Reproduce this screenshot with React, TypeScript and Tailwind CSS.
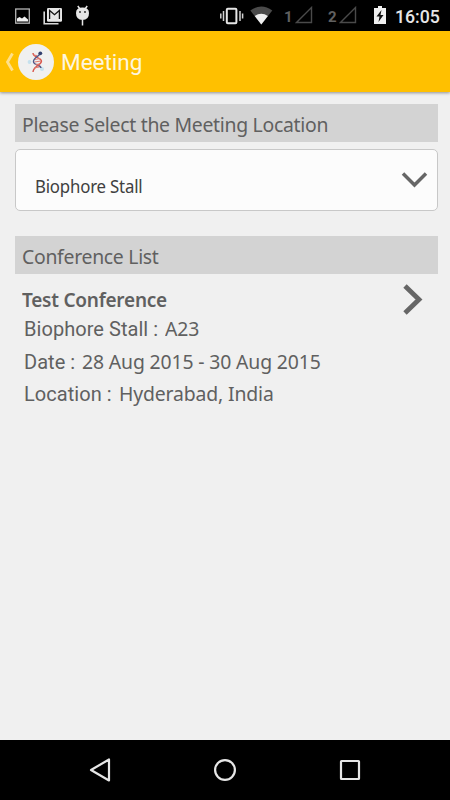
import React from "react";

const StatusBar = () => {
  return (
    <header className="flex h-[31px] items-center bg-black pr-[9px] pl-[15px]">
      <svg width="76" height="24" viewBox="15 4 76 24" fill="none">
        <rect x="15.7" y="9" width="13.6" height="14.2" stroke="#b4b4b4" strokeWidth="1.3" />
        <path d="M17 21.500v-3l2.500-1.500 2.500 1.500 2.500-2 3.500 3v2z" fill="#f0f0f0" />
        <path d="M44.200 11.500v12.300h14.300" stroke="#d8d8d8" strokeWidth="1.600" />
        <rect x="47" y="8" width="15" height="13.800" rx="1.300" fill="#e6e6e6" />
        <path d="M49.600 19v-8.500l4.900 4.200 4.900-4.200v8.500" stroke="#111" strokeWidth="1.300" />
        <path d="M76 13q0-5.500 6.500-5.500t6.500 5.500q0 7-6.500 7t-6.500-7z" fill="#e6e6e6" />
        <path d="M77.800 6l1.800 2.500M87.200 6l-1.800 2.500M82.500 20v5.500" stroke="#e6e6e6" strokeWidth="1.500" />
        <circle cx="80" cy="12" r="0.9" fill="#222" />
        <circle cx="85" cy="12" r="0.9" fill="#222" />
      </svg>
      <div className="ml-auto flex items-center">
        <svg className="mt-px" width="54" height="24" viewBox="219 4 54 24" fill="none">
          <rect x="226.800" y="8.800" width="9.600" height="14.400" rx="1" stroke="#e6e6e6" strokeWidth="2" />
          <path d="M223.500 11v10M240 11v10M220.800 13.500v5M242.600 13.500v5" stroke="#d0d0d0" strokeWidth="1.500" />
          <path d="M250.300 10.500q11-8 22 0l-11 14z" fill="#4a4a4a" />
          <path d="M254.700 16q6.600-4.500 13.200 0l-6.600 8.500z" fill="#f0f0f0" />
        </svg>
        <span className="mt-1 ml-[11px] w-[11px] font-['Roboto',sans-serif] text-[15px] leading-none font-bold text-[#606060]">
          1
        </span>
        <svg width="18" height="18" viewBox="0 0 18 18" fill="none">
          <path d="M16.500 1.500v15h-15z" stroke="#4a4a4a" strokeWidth="1.400" />
        </svg>
        <span className="mt-1 ml-[15px] w-[11px] font-['Roboto',sans-serif] text-[15px] leading-none font-bold text-[#606060]">
          2
        </span>
        <svg width="18" height="18" viewBox="0 0 18 18" fill="none">
          <path d="M16.500 1.500v15h-15z" stroke="#4a4a4a" strokeWidth="1.400" />
        </svg>
        <svg className="ml-[17px]" width="12" height="20" viewBox="0 0 12 20">
          <path d="M4 1h4v2h4v16H0V3h4z" fill="#f0f0f0" />
          <path d="M7.500 5L2.500 11.500h3L4.500 17 9.500 10h-3z" fill="#111" />
        </svg>
        <span className="ml-[9px] w-[46px] pt-[3px] font-['Roboto',sans-serif] text-[17.700px] font-medium text-[#e6e6e6]">
          16:05
        </span>
      </div>
    </header>
  );
};

const Logo = () => {
  return (
    <svg width="36" height="36" viewBox="0 0 36 36" fill="none">
      <circle cx="18" cy="18" r="18" fill="#f0f0f0" />
      <circle cx="11.500" cy="18" r="1.900" fill="#c5e1ee" />
      <circle cx="24" cy="25" r="2" fill="#c5e1ee" />
      <path d="M15 9c0 5 8 4 8.500 8" stroke="#d9574d" strokeWidth="1.400" />
      <path d="M21.500 10.500c-2 2.500-6.500 4-6 7.500s7 2.500 7.500 6" stroke="#4d5688" strokeWidth="1.400" />
      <path d="M23.500 17c0 4.500-8 4.500-8.500 11" stroke="#d9574d" strokeWidth="1.400" />
      <path d="M15 11l4 0.500M17 15.500l5-1M16.500 18l6.500-1M17.500 20.500l4-0.500M16 24l5.500-1" stroke="#df7a70" strokeWidth="1" />
      <circle cx="22.300" cy="9.300" r="1.900" fill="#33406f" />
    </svg>
  );
};

const TitleBar = () => {
  return (
    <div className="flex h-[61px] items-center bg-[#ffc000] pl-1 shadow-[0_1px_3px_rgba(0,0,0,0.4)]">
      <svg width="14" height="20" viewBox="0 0 14 20" fill="none">
        <path d="M8.500 1.500L3.500 10l5 8.500" stroke="#ffe08a" strokeWidth="2.800" />
      </svg>
      <Logo />
      <h1 className="ml-[7px] pt-0.5 font-['Roboto',sans-serif] text-[22.500px] text-[#fdf6e0]">Meeting</h1>
    </div>
  );
};

interface SectionHeadingProps {
  text: string;
}

const SectionHeading: React.FC<SectionHeadingProps> = ({ text }) => {
  return (
    <h2 className="flex h-[38px] items-center bg-[#d3d3d3] pt-[3px] pl-[7px] text-[20px] whitespace-nowrap text-[#606060]">
      <span className="origin-left scale-x-97 tracking-[-0.300px]">{text}</span>
    </h2>
  );
};

const LocationSelect = () => {
  return (
    <button className="mt-[7px] flex h-[62px] w-full justify-between rounded-[5px] border border-[#c8c8c8] bg-[#fcfcfc] pr-[9px] pl-[19px] text-left">
      <span className="origin-left scale-x-96 pt-6 text-[17.500px] leading-[25px] tracking-[-0.200px] whitespace-nowrap text-[#404040]">
        Biophore Stall
      </span>
      <svg className="mt-[21px]" width="27" height="18" viewBox="0 0 27 18" fill="none">
        <path d="M2 2.500L13.500 14 25 2.500" stroke="#666" strokeWidth="3.500" />
      </svg>
    </button>
  );
};

interface DetailProps {
  label: string;
  value: string;
}

const Detail: React.FC<DetailProps> = ({ label, value }) => {
  return (
    <p className="flex h-[32.500px] gap-[7px] text-[20px] leading-7 whitespace-nowrap text-[#606060]">
      <span className="font-['Roboto',sans-serif] tracking-[0.050px]">{label} :</span>
      <span className="origin-left scale-x-97 tracking-[-0.150px]">{value}</span>
    </p>
  );
};

const Conference = () => {
  return (
    <article className="relative pt-3 pl-[9px]">
      <h3 className="mb-px -ml-0.5 w-fit origin-left scale-x-95 text-[20px] leading-7 font-semibold tracking-[-0.250px] text-[#606060]">
        Test Conference
      </h3>
      <Detail label="Biophore Stall" value="A23" />
      <Detail label="Date" value="28 Aug 2015 - 30 Aug 2015" />
      <Detail label="Location" value="Hyderabad, India" />
      <svg className="absolute top-[9px] right-[14px]" width="22" height="34" viewBox="0 0 22 34" fill="none">
        <path d="M3 3l14 13.500L3 30" stroke="#666" strokeWidth="4.800" />
      </svg>
    </article>
  );
};

const NavBar = () => {
  return (
    <nav className="flex h-[60px] items-center justify-between bg-black pr-[89px] pl-[87px]">
      <svg width="24" height="26" viewBox="0 0 24 26" fill="none">
        <path d="M22 2.500v21L4 13z" stroke="#e6e6e6" strokeWidth="2.200" strokeLinejoin="round" />
      </svg>
      <svg width="24" height="24" viewBox="0 0 24 24" fill="none">
        <circle cx="12" cy="12" r="9.900" stroke="#e6e6e6" strokeWidth="2.200" />
      </svg>
      <svg width="22" height="22" viewBox="0 0 22 22" fill="none">
        <rect x="2" y="2" width="18" height="18" rx="0.500" stroke="#e6e6e6" strokeWidth="2.200" />
      </svg>
    </nav>
  );
};

const App = () => {
  return (
    <div className="flex h-[800px] w-[450px] flex-col overflow-hidden bg-[#f0f0f0] font-['Noto_Sans',sans-serif]">
      <StatusBar />
      <TitleBar />
      <main className="flex-1 pt-3 pr-[12.500px] pl-[15px]">
        <SectionHeading text="Please Select the Meeting Location" />
        <LocationSelect />
        <div className="mt-[25px]">
          <SectionHeading text="Conference List" />
        </div>
        <Conference />
      </main>
      <NavBar />
    </div>
  );
};

export default App;
